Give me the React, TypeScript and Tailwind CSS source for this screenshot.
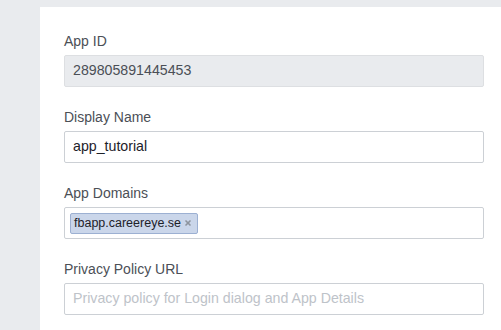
import { X } from "lucide-react";

// ─── Field definitions ────────────────────────────────────────────────────────
function Label({ children }: { children: React.ReactNode }) {
  return (
    <div className="text-[14px] leading-[18px] text-[#4b4f56] mb-[5px]">
      {children}
    </div>
  );
}

export default function App() {
  return (
    <div
      className="w-[501px] h-[330px] bg-[#e9ebee] pt-[7px] pl-[40px] overflow-hidden"
      style={{ fontFamily: '"Liberation Sans", Arial, sans-serif' }}
    >
      <div className="bg-white h-full pt-[25px] pl-[24px]">
        {/* App ID (read-only) */}
        <Label>App ID</Label>
        <div className="w-[420px] h-[32px] mb-[21px] border border-[#dddfe2] bg-[#e9ebee] rounded-[2px] flex items-center px-[8px] text-[14.2px] text-[#4b4f56]">
          289805891445453
        </div>

        {/* Display Name */}
        <Label>Display Name</Label>
        <div className="w-[420px] h-[32px] mb-[21px] border border-[#ccd0d5] bg-white rounded-[2px] flex items-center px-[8px] text-[14.2px] text-[#1d2129]">
          app_tutorial
        </div>

        {/* App Domains with token */}
        <Label>App Domains</Label>
        <div className="w-[420px] h-[32px] mb-[21px] border border-[#ccd0d5] bg-white rounded-[2px] flex items-center pl-[5px]">
          <span className="h-[21px] flex items-center gap-[3px] pl-[3px] pr-[5px] bg-[#cad6ea] border border-[#9cb0d2] rounded-[2px] text-[12.5px] text-[#1d2129]">
            fbapp.careereye.se
            <X className="w-[8px] h-[8px] text-[#8d949e]" strokeWidth={5} />
          </span>
        </div>

        {/* Privacy Policy URL */}
        <Label>Privacy Policy URL</Label>
        <div className="w-[420px] h-[32px] border border-[#ccd0d5] bg-white rounded-[2px] flex items-center px-[8px] text-[14.2px] text-[#bec3c9]">
          Privacy policy for Login dialog and App Details
        </div>
      </div>
    </div>
  );
}
